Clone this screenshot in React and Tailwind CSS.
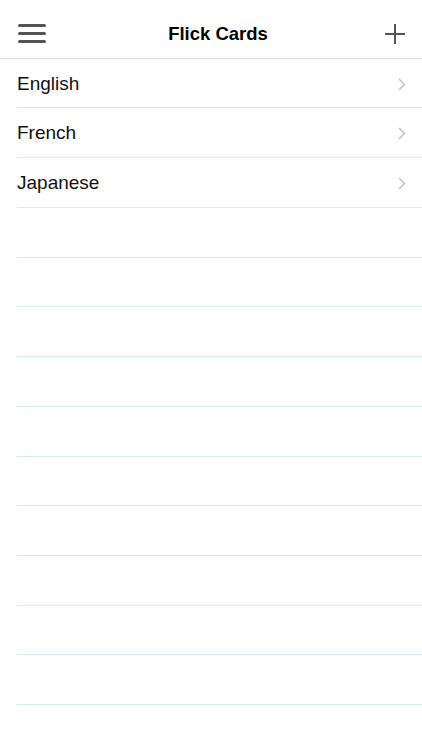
import React from "react";

const decks = ["English", "French", "Japanese"];
// row heights (incl. 1px bottom rule) to land the rules where the screenshot has them
const rowHeights = [49, 50, 50, 50, 49, 50, 50, 50, 49, 50, 50, 49, 50];

const Chevron = () => (
  <svg width="8" height="13" viewBox="0 0 8 13" fill="none">
    <path d="M1 1l5.5 5.5L1 12" stroke="#c4c4c8" strokeWidth="1.6" />
  </svg>
);

const App = () => {
  return (
    <div className="w-[422px] h-[750px] bg-white overflow-hidden" style={{ fontFamily: "'Liberation Sans', Arial, sans-serif" }}>
      <div className="flex items-center justify-between h-[59px] border-b border-[#dcdcdc] pt-[9px] pl-[18px] pr-[16px]">
        <div className="flex flex-col gap-[5px] w-[28px]">
          <span className="h-[3px] rounded-full bg-[#555]" />
          <span className="h-[3px] rounded-full bg-[#555]" />
          <span className="h-[3px] rounded-full bg-[#555]" />
        </div>
        <span className="text-[18.5px] font-bold text-black pl-[6px]">Flick Cards</span>
        <svg width="22" height="22" viewBox="0 0 22 22">
          <path d="M11 1v20M1 11h20" stroke="#555" strokeWidth="2" />
        </svg>
      </div>
      <div className="pl-[17px]">
        {rowHeights.map((h, i) => (
          <div
            key={i}
            className="flex items-center justify-between border-b border-[#d3eef0] pr-[16px] pt-[2px]"
            style={{ height: h }}
          >
            {decks[i] && (
              <>
                <span className="text-[19px] text-[#111]">{decks[i]}</span>
                <Chevron />
              </>
            )}
          </div>
        ))}
      </div>
    </div>
  );
};

export default App;
